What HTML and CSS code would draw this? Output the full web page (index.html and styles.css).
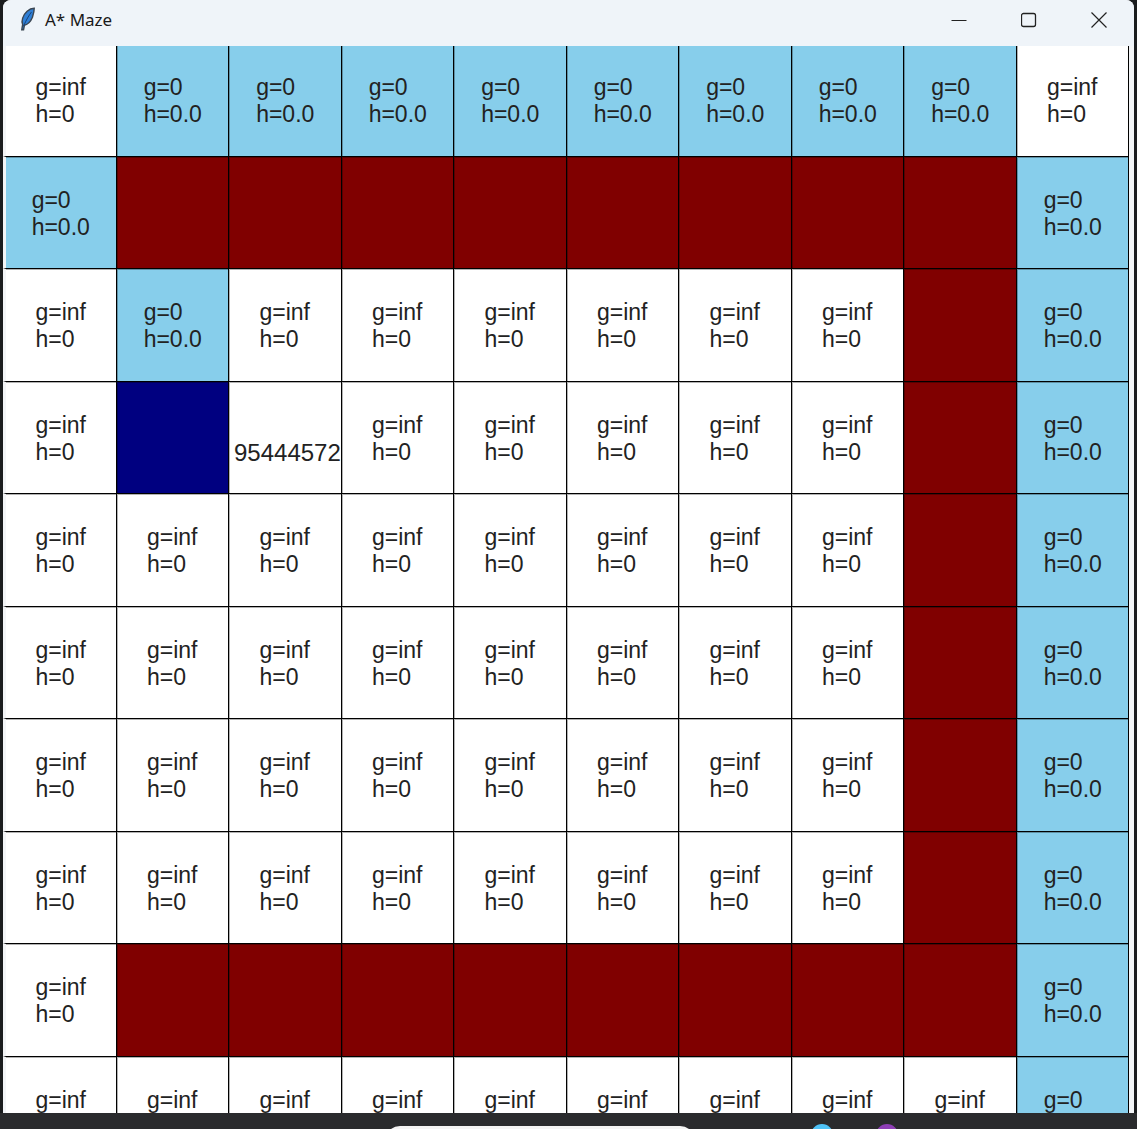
FILE: index.html
```html
<!DOCTYPE html>
<html lang="en">
<head>
    <meta charset="UTF-8">
    <title>A* Maze</title>
    <link rel="stylesheet" href="styles.css">
</head>
<body>

<div class="desktop">
    <div class="edge edge-left"></div>
    <div class="window">
        <div class="titlebar">
            <svg class="feather" width="16" height="24" viewBox="0 0 18 26">
                <path d="M16 1C10 1 5 6 3 12C2 15 2 17 3 19L2 25L4 25L5 20C9 19 12 16 14 11C15 8 16 4 16 1Z" fill="#2f7fd6" stroke="#3b4652" stroke-width="1.6"/>
                <path d="M13 5C10 9 7 14 4 21" fill="none" stroke="#123a6b" stroke-width="1"/>
            </svg>
            <span class="title">A* Maze</span>
            <div class="controls">
                <svg class="control" width="16" height="16" viewBox="0 0 16 16"><path d="M0.5 8.5H15.5" stroke="#222" stroke-width="1"/></svg>
                <svg class="control" width="16" height="16" viewBox="0 0 16 16"><rect x="0.5" y="1.5" width="14" height="13" rx="2" fill="none" stroke="#222" stroke-width="1.3"/></svg>
                <svg class="control" width="16" height="16" viewBox="0 0 16 16"><path d="M0.5 0.5L15.5 15.5M15.5 0.5L0.5 15.5" stroke="#222" stroke-width="1.2"/></svg>
            </div>
        </div>
        <div class="board">
            <!-- row 0 -->
            <div class="cell"><span>g=inf<br>h=0</span></div>
            <div class="cell open"><span>g=0<br>h=0.0</span></div>
            <div class="cell open"><span>g=0<br>h=0.0</span></div>
            <div class="cell open"><span>g=0<br>h=0.0</span></div>
            <div class="cell open"><span>g=0<br>h=0.0</span></div>
            <div class="cell open"><span>g=0<br>h=0.0</span></div>
            <div class="cell open"><span>g=0<br>h=0.0</span></div>
            <div class="cell open"><span>g=0<br>h=0.0</span></div>
            <div class="cell open"><span>g=0<br>h=0.0</span></div>
            <div class="cell"><span>g=inf<br>h=0</span></div>
            <!-- row 1 -->
            <div class="cell open"><span>g=0<br>h=0.0</span></div>
            <div class="cell wall"></div>
            <div class="cell wall"></div>
            <div class="cell wall"></div>
            <div class="cell wall"></div>
            <div class="cell wall"></div>
            <div class="cell wall"></div>
            <div class="cell wall"></div>
            <div class="cell wall"></div>
            <div class="cell open"><span>g=0<br>h=0.0</span></div>
            <!-- row 2 -->
            <div class="cell"><span>g=inf<br>h=0</span></div>
            <div class="cell open"><span>g=0<br>h=0.0</span></div>
            <div class="cell"><span>g=inf<br>h=0</span></div>
            <div class="cell"><span>g=inf<br>h=0</span></div>
            <div class="cell"><span>g=inf<br>h=0</span></div>
            <div class="cell"><span>g=inf<br>h=0</span></div>
            <div class="cell"><span>g=inf<br>h=0</span></div>
            <div class="cell"><span>g=inf<br>h=0</span></div>
            <div class="cell wall"></div>
            <div class="cell open"><span>g=0<br>h=0.0</span></div>
            <!-- row 3 -->
            <div class="cell"><span>g=inf<br>h=0</span></div>
            <div class="cell start"></div>
            <div class="cell number"><span>&nbsp;<br>95444572</span></div>
            <div class="cell"><span>g=inf<br>h=0</span></div>
            <div class="cell"><span>g=inf<br>h=0</span></div>
            <div class="cell"><span>g=inf<br>h=0</span></div>
            <div class="cell"><span>g=inf<br>h=0</span></div>
            <div class="cell"><span>g=inf<br>h=0</span></div>
            <div class="cell wall"></div>
            <div class="cell open"><span>g=0<br>h=0.0</span></div>
            <!-- row 4 -->
            <div class="cell"><span>g=inf<br>h=0</span></div>
            <div class="cell"><span>g=inf<br>h=0</span></div>
            <div class="cell"><span>g=inf<br>h=0</span></div>
            <div class="cell"><span>g=inf<br>h=0</span></div>
            <div class="cell"><span>g=inf<br>h=0</span></div>
            <div class="cell"><span>g=inf<br>h=0</span></div>
            <div class="cell"><span>g=inf<br>h=0</span></div>
            <div class="cell"><span>g=inf<br>h=0</span></div>
            <div class="cell wall"></div>
            <div class="cell open"><span>g=0<br>h=0.0</span></div>
            <!-- row 5 -->
            <div class="cell"><span>g=inf<br>h=0</span></div>
            <div class="cell"><span>g=inf<br>h=0</span></div>
            <div class="cell"><span>g=inf<br>h=0</span></div>
            <div class="cell"><span>g=inf<br>h=0</span></div>
            <div class="cell"><span>g=inf<br>h=0</span></div>
            <div class="cell"><span>g=inf<br>h=0</span></div>
            <div class="cell"><span>g=inf<br>h=0</span></div>
            <div class="cell"><span>g=inf<br>h=0</span></div>
            <div class="cell wall"></div>
            <div class="cell open"><span>g=0<br>h=0.0</span></div>
            <!-- row 6 -->
            <div class="cell"><span>g=inf<br>h=0</span></div>
            <div class="cell"><span>g=inf<br>h=0</span></div>
            <div class="cell"><span>g=inf<br>h=0</span></div>
            <div class="cell"><span>g=inf<br>h=0</span></div>
            <div class="cell"><span>g=inf<br>h=0</span></div>
            <div class="cell"><span>g=inf<br>h=0</span></div>
            <div class="cell"><span>g=inf<br>h=0</span></div>
            <div class="cell"><span>g=inf<br>h=0</span></div>
            <div class="cell wall"></div>
            <div class="cell open"><span>g=0<br>h=0.0</span></div>
            <!-- row 7 -->
            <div class="cell"><span>g=inf<br>h=0</span></div>
            <div class="cell"><span>g=inf<br>h=0</span></div>
            <div class="cell"><span>g=inf<br>h=0</span></div>
            <div class="cell"><span>g=inf<br>h=0</span></div>
            <div class="cell"><span>g=inf<br>h=0</span></div>
            <div class="cell"><span>g=inf<br>h=0</span></div>
            <div class="cell"><span>g=inf<br>h=0</span></div>
            <div class="cell"><span>g=inf<br>h=0</span></div>
            <div class="cell wall"></div>
            <div class="cell open"><span>g=0<br>h=0.0</span></div>
            <!-- row 8 -->
            <div class="cell"><span>g=inf<br>h=0</span></div>
            <div class="cell wall"></div>
            <div class="cell wall"></div>
            <div class="cell wall"></div>
            <div class="cell wall"></div>
            <div class="cell wall"></div>
            <div class="cell wall"></div>
            <div class="cell wall"></div>
            <div class="cell wall"></div>
            <div class="cell open"><span>g=0<br>h=0.0</span></div>
            <!-- row 9 -->
            <div class="cell"><span>g=inf<br>h=0</span></div>
            <div class="cell"><span>g=inf<br>h=0</span></div>
            <div class="cell"><span>g=inf<br>h=0</span></div>
            <div class="cell"><span>g=inf<br>h=0</span></div>
            <div class="cell"><span>g=inf<br>h=0</span></div>
            <div class="cell"><span>g=inf<br>h=0</span></div>
            <div class="cell"><span>g=inf<br>h=0</span></div>
            <div class="cell"><span>g=inf<br>h=0</span></div>
            <div class="cell"><span>g=inf<br>h=0</span></div>
            <div class="cell open"><span>g=0<br>h=0.0</span></div>
        </div>
    </div>
    <div class="edge edge-right"></div>
</div>

<div class="taskbar">
    <div class="searchbox"></div>
    <div class="tray-dot dot-blue"></div>
    <div class="tray-dot dot-purple"></div>
</div>

</body>
</html>
```
FILE: styles.css
```css
* {
    box-sizing: border-box;
}
html, body {
    margin: 0;
    height: 100%;
    overflow: hidden;
}
body {
    background: #1a1c1e;
    font-family: 'Liberation Sans', Arial, sans-serif;
    display: flex;
    flex-direction: column;
}
.desktop {
    display: flex;
    height: 1113px;
}
.edge {
    width: 3px;
    flex: none;
    background: #1a1c1e;
}
.window {
    width: 1131px;
    background: #f3f5f7;
    border-top-left-radius: 8px;
    border-top-right-radius: 8px;
    overflow: hidden;
}
.titlebar {
    height: 46px;
    background: #eff4f9;
    display: flex;
    align-items: center;
    padding-left: 17px;
}
.feather {
    flex: none;
    margin-top: -9px;
}
.title {
    font-family: 'Noto Sans', sans-serif;
    font-size: 17px;
    color: #1a1a1a;
    margin-left: 9px;
    margin-top: -7px;
}
.controls {
    margin-left: auto;
    display: flex;
    gap: 54px;
    padding-right: 27px;
    margin-top: -6px;
}
.board {
    display: grid;
    grid-template-columns: 113.5px repeat(9, 112.5px);
    grid-template-rows: 110.5px repeat(9, 112.5px);
    width: 1126px;
}
.cell {
    background: #fff;
    border-right: 1px solid #000;
    border-bottom: 1px solid #000;
    box-shadow: inset 1px 1px 0 rgba(0, 0, 0, 0.3);
    display: flex;
    align-items: center;
    justify-content: center;
    overflow: hidden;
    padding-top: 3px;
    font-size: 23px;
    line-height: 27px;
    color: #222;
}
.board .cell:nth-child(10n+1) {
    border-left: 3px solid #f3f5f7;
    box-shadow: inset 0 1px 0 rgba(0, 0, 0, 0.3);
}
.board .cell:nth-child(-n+10) {
    box-shadow: inset 1px 0 0 rgba(0, 0, 0, 0.3);
    padding-top: 1px;
}
.board .cell:first-child {
    box-shadow: none;
}
.open {
    background: #87ceeb;
    padding-left: 1px;
}
.board .open:nth-child(10n+1) {
    padding-left: 0;
}
.wall {
    background: #800000;
}
.start {
    background: #000080;
}
.number {
    justify-content: flex-start;
    padding-left: 5px;
    white-space: nowrap;
    font-size: 24px;
}
.taskbar {
    height: 16px;
    background: #2a2b2d;
    display: flex;
    overflow: hidden;
    padding-top: 13px;
}
.searchbox {
    flex: none;
    width: 310px;
    height: 30px;
    margin-left: 385px;
    background: #f4f4f4;
    border-radius: 15px;
}
.tray-dot {
    flex: none;
    width: 22px;
    height: 22px;
    border-radius: 50%;
    margin-top: -2px;
}
.dot-blue {
    background: #4fc3f7;
    margin-left: 116px;
}
.dot-purple {
    background: #8e3fb5;
    margin-left: 43px;
}
```
